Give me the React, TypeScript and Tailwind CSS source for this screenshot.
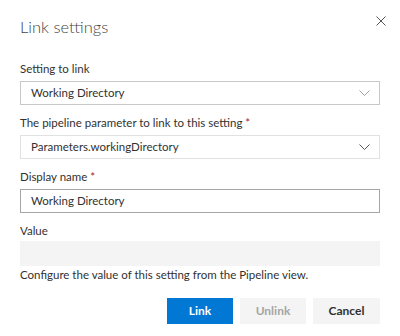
const Chevron = ({ color }: { color: string }) => (
  <svg width="11" height="6" viewBox="0 0 11 6" fill="none" className="shrink-0">
    <path d="M0.5 0.5L5.5 5.5L10.5 0.5" stroke={color} strokeWidth="1" />
  </svg>
);

const Req = () => <span className="text-[#a4262c]"> *</span>;

export default function App() {
  return (
    <div
      className="w-[400px] h-[336px] bg-white px-5 pt-[15px] text-[#323130]"
      style={{ fontFamily: "Lato, 'Noto Sans', sans-serif" }}
    >
      <div className="flex items-start justify-between">
        <h1 className="text-[16.5px] font-light leading-[24px] text-[#444]">Link settings</h1>
        <svg width="10" height="10" viewBox="0 0 10 10" className="mt-[1px] mr-[-6px]">
          <path d="M0.5 0.5L9.5 9.5M9.5 0.5L0.5 9.5" stroke="#555" strokeWidth="1" />
        </svg>
      </div>

      <div className="mt-[22px] text-[11.5px] leading-[16px]">Setting to link</div>
      <div className="mt-[4px] flex h-[24px] items-center justify-between border border-[#c8c8c8] pl-[10px] pr-[9px] text-[11.5px]">
        <span>Working Directory</span>
        <Chevron color="#a0a0a0" />
      </div>

      <div className="mt-[10px] text-[11.5px] leading-[16px]">
        The pipeline parameter to link to this setting<Req />
      </div>
      <div className="mt-[4px] flex h-[24px] items-center justify-between border border-[#e1e1e1] pl-[10px] pr-[9px] text-[11.5px]">
        <span>Parameters.workingDirectory</span>
        <Chevron color="#555" />
      </div>

      <div className="mt-[10px] text-[11.5px] leading-[16px]">
        Display name<Req />
      </div>
      <div className="mt-[4px] flex h-[24px] items-center border border-[#a6a6a6] pl-[10px] text-[11.5px]">
        Working Directory
      </div>

      <div className="mt-[10px] text-[11.5px] leading-[16px]">Value</div>
      <div className="mt-[2px] h-[25px] bg-[#f4f4f4]" />
      <div className="mt-[1px] text-[11.5px] leading-[16px]">
        Configure the value of this setting from the Pipeline view.
      </div>

      <div className="mt-[15px] flex justify-end gap-[7px] text-[12px] font-bold">
        <button className="h-[26px] w-[66px] bg-[#0078d4] text-white">Link</button>
        <button className="h-[26px] w-[66px] bg-[#f4f4f4] text-[#a6a6a6]">Unlink</button>
        <button className="h-[26px] w-[67px] bg-[#f4f4f4] text-[#323130]">Cancel</button>
      </div>
    </div>
  );
}
